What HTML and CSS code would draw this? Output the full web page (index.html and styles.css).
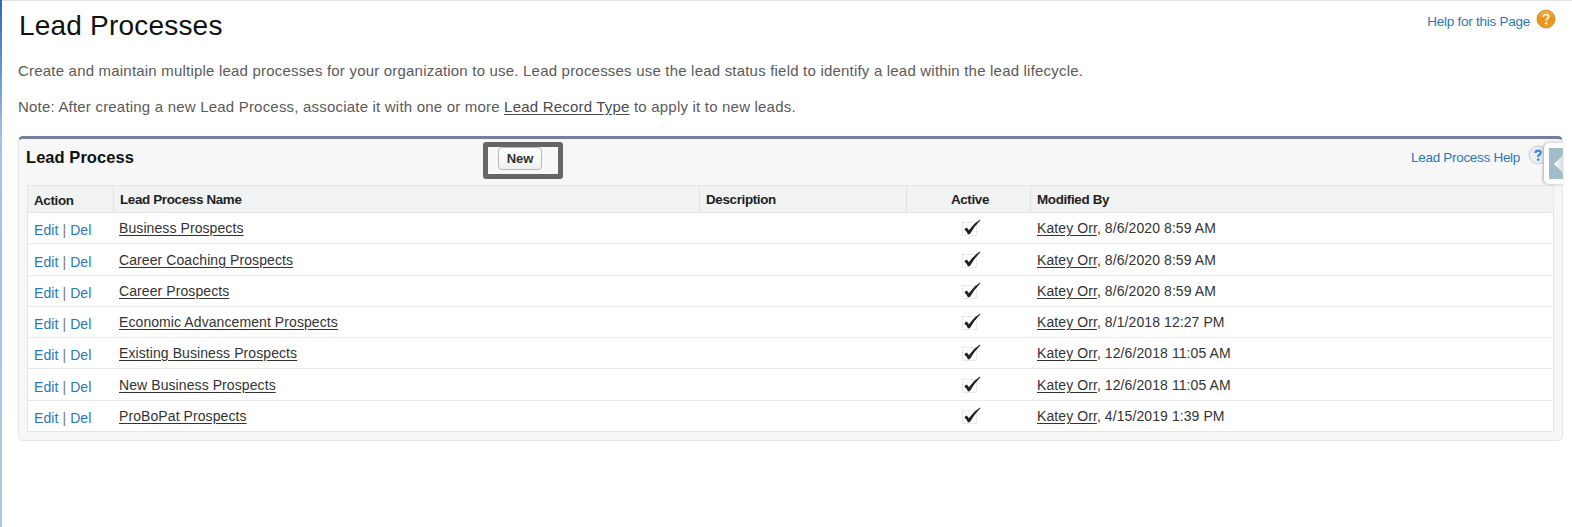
FILE: index.html
```html
<!DOCTYPE html>
<html lang="en">
<head>
<meta charset="utf-8">
<title>Lead Processes</title>
<link rel="stylesheet" href="styles.css">
</head>
<body>
<svg class="defs" width="0" height="0" aria-hidden="true">
  <symbol id="check" viewBox="0 0 20 20">
    <rect x="1.5" y="4.5" width="14" height="13" fill="none" stroke="#dadada" stroke-dasharray="1.5 1"/>
    <path d="M3.3 11.2 L5.6 9.6 Q7 10.8 7.8 12.2 Q12.5 5.6 19 1.6 L19.4 2.2 Q13 8.6 9 16 L7 16.6 Q5.4 13 3.3 11.2Z" fill="#222"/>
  </symbol>
</svg>
<div class="edge"></div>
<main class="page">
  <header class="top">
    <h1 class="title"><span>Lead Processes</span></h1>
    <a class="help-page"><span>Help for this Page</span>
      <svg class="q-orange" viewBox="0 0 20 20"><defs><linearGradient id="og" x1="0" y1="0" x2="0" y2="1"><stop offset="0" stop-color="#f2b04a"/><stop offset=".5" stop-color="#ea9312"/><stop offset="1" stop-color="#eda024"/></linearGradient></defs><circle cx="10" cy="10" r="9" fill="url(#og)" stroke="#bd7c25" stroke-width=".8"/><path d="M7.3 8 Q7.4 5.6 10 5.6 Q12.6 5.6 12.6 7.7 Q12.6 9 11.2 9.8 Q10.1 10.4 10.1 11.8" fill="none" stroke="#fff3dc" stroke-width="1.9"/><circle cx="10.1" cy="14.3" r="1.2" fill="#fff3dc"/></svg>
    </a>
  </header>
  <p class="intro">Create and maintain multiple lead processes for your organization to use. Lead processes use the lead status field to identify a lead within the lead lifecycle.</p>
  <p class="intro">Note: After creating a new Lead Process, associate it with one or more <a class="ul">Lead Record Type</a> to apply it to new leads.</p>
  <section class="panel">
    <div class="bar">
      <h2 class="sub">Lead Process</h2>
      <div class="focus"><button class="new">New</button></div>
      <a class="help-list"><span>Lead Process Help</span>
        <svg class="q-blue" viewBox="0 0 20 20"><circle cx="10" cy="10" r="9" fill="#ebedf0" stroke="#c9cbce"/><path d="M7.4 8 Q7.6 5.6 10.2 5.6 Q12.8 5.6 12.8 7.6 Q12.8 9 11.4 9.8 Q10.2 10.5 10.2 12" fill="none" stroke="#3b87dc" stroke-width="2.2"/><circle cx="10.2" cy="14.6" r="1.3" fill="#3b87dc"/></svg>
      </a>
      <div class="tab"><svg viewBox="0 0 14 31"><defs><linearGradient id="ar"><stop offset="0" stop-color="#fff"/><stop offset="1" stop-color="#d5dcde"/></linearGradient></defs><rect width="14" height="31" fill="#a3bec9"/><path d="M5 16 L14 7 V25Z" fill="url(#ar)"/></svg></div>
    </div>
    <div class="grid">
      <div class="row head"><div class="first">Action</div><div>Lead Process Name</div><div>Description</div><div>Active</div><div>Modified By</div></div>
      <div class="row"><div class="act"><a>Edit</a> | <a>Del</a></div><div><a class="ul">Business Prospects</a></div><div></div><div><svg class="ck"><use href="#check"/></svg></div><div><a class="ul">Katey Orr</a>, 8/6/2020 8:59 AM</div></div>
      <div class="row low"><div class="act"><a>Edit</a> | <a>Del</a></div><div><a class="ul">Career Coaching Prospects</a></div><div></div><div><svg class="ck"><use href="#check"/></svg></div><div><a class="ul">Katey Orr</a>, 8/6/2020 8:59 AM</div></div>
      <div class="row"><div class="act"><a>Edit</a> | <a>Del</a></div><div><a class="ul">Career Prospects</a></div><div></div><div><svg class="ck"><use href="#check"/></svg></div><div><a class="ul">Katey Orr</a>, 8/6/2020 8:59 AM</div></div>
      <div class="row"><div class="act"><a>Edit</a> | <a>Del</a></div><div><a class="ul">Economic Advancement Prospects</a></div><div></div><div><svg class="ck"><use href="#check"/></svg></div><div><a class="ul">Katey Orr</a>, 8/1/2018 12:27 PM</div></div>
      <div class="row"><div class="act"><a>Edit</a> | <a>Del</a></div><div><a class="ul">Existing Business Prospects</a></div><div></div><div><svg class="ck"><use href="#check"/></svg></div><div><a class="ul">Katey Orr</a>, 12/6/2018 11:05 AM</div></div>
      <div class="row low"><div class="act"><a>Edit</a> | <a>Del</a></div><div><a class="ul">New Business Prospects</a></div><div></div><div><svg class="ck"><use href="#check"/></svg></div><div><a class="ul">Katey Orr</a>, 12/6/2018 11:05 AM</div></div>
      <div class="row"><div class="act"><a>Edit</a> | <a>Del</a></div><div><a class="ul">ProBoPat Prospects</a></div><div></div><div><svg class="ck"><use href="#check"/></svg></div><div><a class="ul">Katey Orr</a>, 4/15/2019 1:39 PM</div></div>
    </div>
  </section>
</main>
</body>
</html>
```
FILE: styles.css
```css
* { box-sizing: border-box; }
body { margin: 0; height: 527px; overflow: hidden; display: flex; background: #fff; font-family: "Liberation Sans", Arial, sans-serif; color: #333; }
.defs { position: absolute; }
.edge { flex: none; width: 2px; background: linear-gradient(#2f6cb3, #6d9bd3 80px, #a9bfe3 140px, #b0c4e5); }
.page { flex: 1; padding: 0 9px 0 16px; border-top: 1px solid #e2e2e4; }
.top { display: flex; justify-content: space-between; height: 60px; }
.title { margin: 0; padding: 9px 0 0 1px; font-size: 28px; font-weight: 400; line-height: 32px; letter-spacing: .2px; color: #111; }
.help-page { display: flex; padding: 8px 7px 0 0; font-size: 13.5px; letter-spacing: -.25px; line-height: 25px; color: #2a77b8; }
.q-orange { width: 20px; height: 20px; margin-left: 6px; }
.intro { margin: 0; height: 36px; font-size: 15px; letter-spacing: .2px; line-height: 20px; color: #5a5a5a; white-space: nowrap; }
.ul { text-decoration: underline; text-underline-offset: 2px; color: #333; }
.intro .ul { color: #4a4a4a; }
.panel { margin-top: 3px; height: 305px; background: #f7f7f7; border: 1px solid #e5e7e7; border-top: 3px solid #737f9c; border-radius: 5px; padding: 0 8px; }
.bar { position: relative; display: flex; height: 46px; }
.sub { margin: 0 0 0 -1px; width: 457px; font-size: 16.5px; letter-spacing: .05px; line-height: 20px; padding-top: 8px; color: #111; }
.focus { width: 80px; height: 37px; margin-top: 3px; border: 5px solid #666; border-radius: 3px; padding-left: 10px; }
.new { display: block; width: 44px; height: 23px; padding: 0; border: 1px solid #b9b9b9; border-radius: 4px; background: linear-gradient(#fff, #f0f0f0); font: bold 13px/20px "Liberation Sans", Arial, sans-serif; color: #333; }
.help-list { display: flex; margin-left: auto; margin-right: 6px; padding-top: 6px; font-size: 13.5px; letter-spacing: -.3px; line-height: 26px; color: #2a77b8; }
.q-blue { width: 20px; height: 20px; margin-left: 8px; }
.tab { position: absolute; right: -9px; top: 4px; width: 19px; height: 41px; padding: 5px 0 0 5px; background: #fff; border-radius: 5px 0 0 5px; box-shadow: -1px 0 3px #aaa; }
.tab svg { display: block; width: 14px; height: 31px; }
.grid { border: 1px solid #e2e5e5; background: #fff; height: 247px; display: flex; flex-direction: column; }
.row { display: grid; grid-template-columns: 85px 586px 207px 124px 1fr; flex: 1 1 0; min-height: 0; border-bottom: 1px solid #eaeaea; font-size: 14px; letter-spacing: .085px; line-height: 30px; white-space: nowrap; }
.row:last-child { border-bottom: 0; }
.row > div { height: 30px; padding-left: 6px; }
.row > div:nth-child(3), .row > div:last-child { padding-left: 7px; }
.row.head > div:nth-child(3), .row.head > div:last-child { padding-left: 6px; }
.row > div:nth-child(4) { padding: 0 0 0 6px; text-align: center; }
.row.head > div:nth-child(4) { padding: 0 0 0 3px; }
.row > .act { line-height: 34px; color: #777; }
.act a { color: #2a77b8; }
.low { padding-top: 1px; }
.head { flex: 0 0 27px; background: #f1f3f3; border-bottom-color: #dfe4e4; font-size: 13.4px; letter-spacing: -.34px; font-weight: 700; line-height: 28px; color: #222; }
.row.head > div { height: 26px; }
.head > .first { line-height: 30px; }
.head > div + div { border-left: 1px solid #dfe3e3; }
.ck { display: inline-block; vertical-align: top; width: 20px; height: 20px; margin-top: 5px; }
```
